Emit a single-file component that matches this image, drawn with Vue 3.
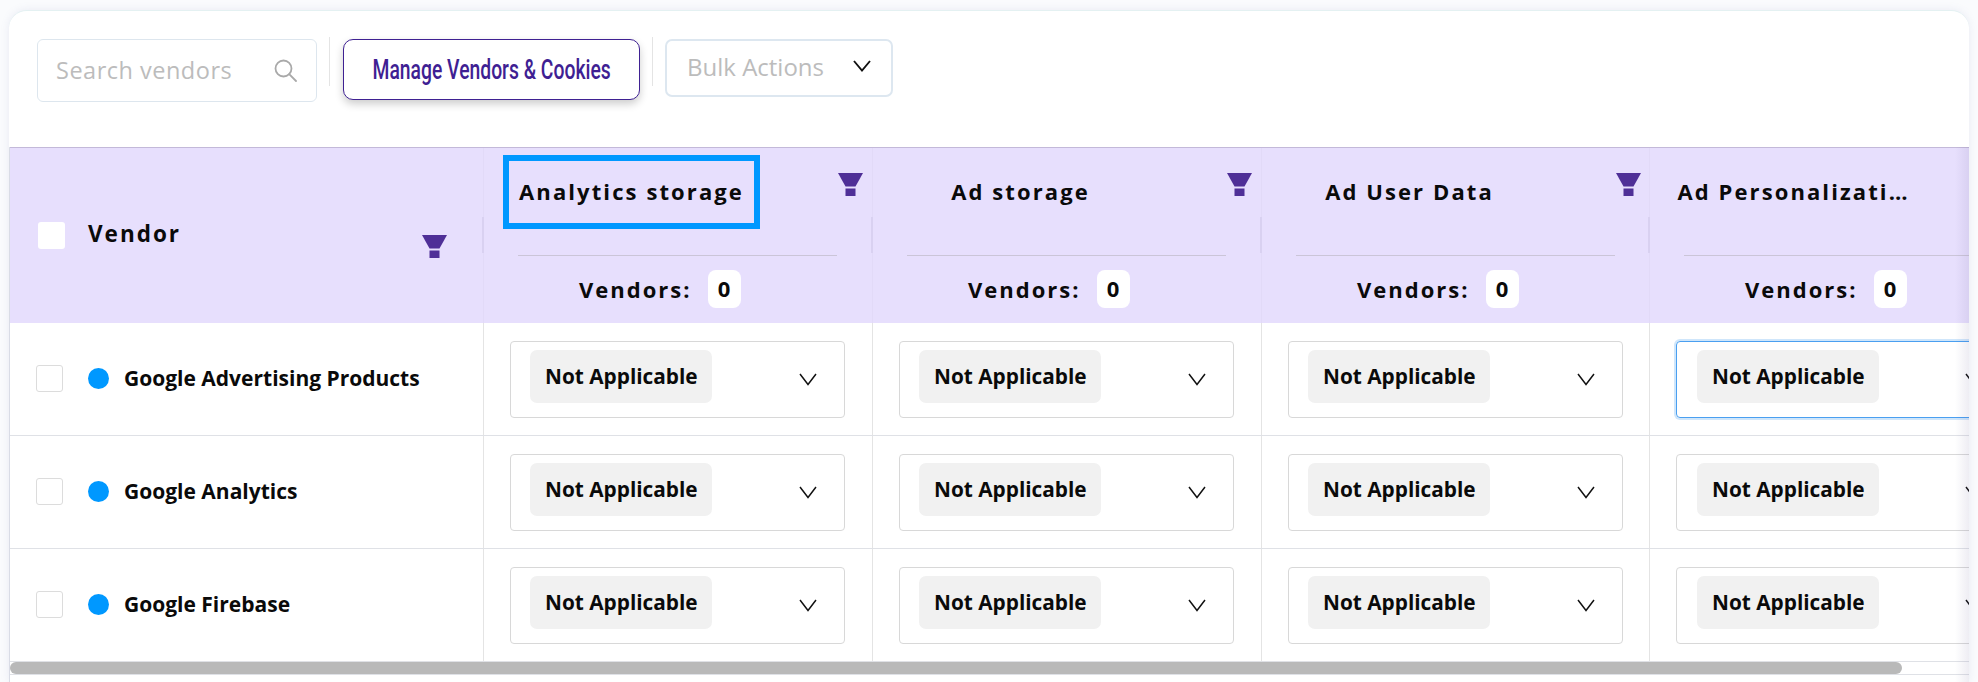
<script setup>
const columns = [
  { title: 'Analytics storage', active: true, filter: true },
  { title: 'Ad storage', filter: true },
  { title: 'Ad User Data', filter: true, narrow: true },
  { title: 'Ad Personalizati…', last: true, filter: false }
]
const vendors = ['Google Advertising Products', 'Google Analytics', 'Google Firebase']
</script>

<template>
  <div class="page">
    <section class="card">
      <div class="toolbar">
        <div class="search">
          <span class="placeholder">Search vendors</span>
          <svg class="search-icon" width="23" height="23" viewBox="0 0 23 23" fill="none" stroke="#a9a9a9" stroke-width="1.8">
            <circle cx="9.5" cy="9.5" r="8" />
            <path d="M15.2 15.2L22 22" stroke-linecap="round" />
          </svg>
        </div>
        <div class="divider"></div>
        <button class="manage"><span>Manage Vendors &amp; Cookies</span></button>
        <div class="divider second"></div>
        <div class="bulk">
          <span class="bulk-label">Bulk Actions</span>
          <svg class="bulk-chev" width="18" height="12" viewBox="0 0 18 12" fill="none" stroke="#111" stroke-width="1.9">
            <path d="M1 1l8 9.5L17 1" />
          </svg>
        </div>
      </div>

      <div class="table">
        <div class="head-row">
          <div class="head-vendor">
            <span class="head-check"></span>
            <span class="head-label">Vendor</span>
            <svg class="funnel vendor-funnel" width="25" height="23" viewBox="0 0 25 23">
              <path d="M0 0h25l-7.500 13.500h-10z" fill="#4f2f97" />
              <rect x="7.500" y="15.500" width="10" height="7.500" fill="#4f2f97" />
            </svg>
          </div>
          <div v-for="c in columns" :key="c.title" class="head-col" :class="{ wide: c.last, narrow: c.narrow }">
            <div class="title-row">
              <div class="title-box" :class="{ active: c.active, shifted: c.last }">{{ c.title }}</div>
              <svg v-if="c.filter" class="funnel" width="25" height="23" viewBox="0 0 25 23">
                <path d="M0 0h25l-7.500 13.500h-10z" fill="#4f2f97" />
                <rect x="7.500" y="15.500" width="10" height="7.500" fill="#4f2f97" />
              </svg>
            </div>
            <div class="head-rule"></div>
            <div class="count-row">
              <span class="count-label">Vendors:</span>
              <span class="count-chip">0</span>
            </div>
          </div>
        </div>

        <div v-for="(v, r) in vendors" :key="v" class="row">
          <div class="vendor-cell">
            <span class="check"></span>
            <span class="dot"></span>
            <span class="name">{{ v }}</span>
          </div>
          <div v-for="c in columns" :key="c.title" class="cell" :class="{ wide: c.last, narrow: c.narrow }">
            <div class="select" :class="{ focused: c.last && r === 0 }">
              <span class="chip">Not Applicable</span>
              <svg class="chev" width="18" height="13" viewBox="0 0 18 13" fill="none" stroke="#111" stroke-width="1.500">
                <path d="M1 1l8 10.500L17 1" />
              </svg>
            </div>
          </div>
        </div>

        <div class="scrollbar"><div class="thumb"></div></div>
        <div class="fade"></div>
      </div>
    </section>
  </div>
</template>

<style>
html, body { margin: 0; background: #fafbfd; }
</style>

<style scoped>
.page {
  width: 1978px;
  height: 682px;
  overflow: hidden;
  padding: 10px 9px 0;
  box-sizing: border-box;
  font-family: "Open Sans", "Noto Sans", sans-serif;
  color: #0a0a0a;
}
.card {
  width: 1960px;
  height: 672px;
  background: #fff;
  border-radius: 18px 18px 0 0;
  border-top: 1px solid #e4f1f2;
  box-shadow: 0 0 9px rgba(125, 135, 185, 0.14);
  box-sizing: border-box;
  overflow: hidden;
}
.toolbar {
  height: 136px;
  box-sizing: border-box;
  padding: 28px 0 0 28px;
  display: flex;
  align-items: flex-start;
}
.search {
  width: 280px;
  height: 63px;
  box-sizing: border-box;
  border: 1px solid #dde6ee;
  border-radius: 6px;
  display: flex;
  align-items: center;
  padding: 0 19px 0 18px;
}
.placeholder {
  color: #bcbcbc;
  font-size: 23.500px;
  letter-spacing: 0.5px;
  flex: 1;
  margin-top: -2px;
}
.divider {
  width: 1px;
  height: 49px;
  margin: -2px 13px 0 12px;
  background: #e4e4e4;
}
.divider.second { margin: -2px 12px 0 12px; }
.manage {
  width: 297px;
  height: 61px;
  box-sizing: border-box;
  border: 1.5px solid #3f2192;
  border-radius: 10px;
  background: #fff;
  box-shadow: 0 4px 8px rgba(0, 0, 0, 0.2);
  padding: 0;
  font-family: Roboto, "Liberation Sans", sans-serif;
  font-weight: 500;
  font-size: 28px;
  color: #3f1f93;
  white-space: nowrap;
  display: flex;
  align-items: center;
  justify-content: center;
}
.manage span {
  display: inline-block;
  transform: scaleX(0.69);
}
.bulk {
  width: 228px;
  height: 58px;
  box-sizing: border-box;
  border: 2px solid #dde7f0;
  border-radius: 7px;
  display: flex;
  align-items: center;
  padding: 0 20px 4px 20px;
}
.bulk-label {
  color: #bcbcbc;
  font-size: 24px;
  flex: 1;
}
.table {
  position: relative;
  height: 535px;
  border-left: 1px solid #d9dce6;
  overflow: hidden;
}
.head-row {
  height: 176px;
  box-sizing: border-box;
  background: #e7dffd;
  border-top: 1px solid #c3b9d9;
  display: flex;
}
.head-vendor {
  width: 473px;
  flex: none;
  display: flex;
  align-items: flex-start;
  padding: 74px 36px 0 28px;
  box-sizing: border-box;
}
.head-check {
  width: 27px;
  height: 27px;
  background: #fff;
  border-radius: 3px;
}
.head-label {
  margin-left: 23px;
  font-weight: 700;
  font-size: 22.500px;
  line-height: 24px;
  letter-spacing: 2px;
}
.funnel { flex: none; }
.vendor-funnel { margin: 13px 0 0 auto; }
.head-col {
  width: 389px;
  flex: none;
  box-sizing: border-box;
  border-left: 1px solid #e2daf8;
  position: relative;
  padding-top: 7px;
}
.head-col.narrow { width: 388px; }
.head-col.wide { width: 340px; }
.head-col::before {
  content: "";
  position: absolute;
  left: -2px;
  top: 69px;
  height: 36px;
  width: 2px;
  background: #d9d1f1;
}
.title-row {
  display: flex;
  align-items: flex-start;
  padding-left: 19px;
}
.title-box {
  width: 257px;
  height: 74px;
  box-sizing: border-box;
  border: 6px solid transparent;
  font-weight: 700;
  font-size: 22px;
  letter-spacing: 2.1px;
  line-height: 60px;
  text-align: center;
  white-space: nowrap;
  flex: none;
}
.title-box.active { border-color: #0098ff; }
.title-box.shifted { width: 249px; }
.title-row .funnel { margin: 18px 0 0 78px; }
.head-rule {
  width: 319px;
  height: 1px;
  background: #cbc5d8;
  margin: 26px 0 0 34px;
}
.count-row {
  display: flex;
  align-items: center;
  padding-left: 95px;
  margin-top: 14px;
}
.count-label {
  font-weight: 700;
  font-size: 22px;
  letter-spacing: 2px;
  line-height: 36px;
}
.count-chip {
  width: 33px;
  height: 38px;
  margin-left: 16px;
  background: #fff;
  border-radius: 8px;
  font-weight: 700;
  font-size: 22px;
  line-height: 37px;
  text-align: center;
}
.row {
  height: 113px;
  box-sizing: border-box;
  display: flex;
  border-bottom: 1px solid #dfe1e6;
}
.vendor-cell {
  width: 473px;
  flex: none;
  display: flex;
  align-items: center;
  padding: 0 0 2px 26px;
  box-sizing: border-box;
}
.check {
  width: 27px;
  height: 27px;
  box-sizing: border-box;
  border: 1px solid #dcdcdc;
  border-radius: 3px;
  flex: none;
}
.dot {
  width: 21px;
  height: 21px;
  border-radius: 50%;
  background: #0098ff;
  margin-left: 25px;
  flex: none;
}
.name {
  margin-left: 15px;
  font-weight: 700;
  font-size: 21px;
  white-space: nowrap;
}
.cell {
  width: 389px;
  flex: none;
  box-sizing: border-box;
  border-left: 1px solid #e4e4e4;
  display: flex;
  align-items: center;
  padding-left: 26px;
}
.cell.narrow { width: 388px; }
.cell.wide { width: 340px; overflow: hidden; }
.select {
  width: 335px;
  height: 77px;
  flex: none;
  box-sizing: border-box;
  border: 1px solid #d8d8d8;
  border-radius: 4px;
  display: flex;
  align-items: flex-start;
  padding: 8px 27px 0 19px;
}
.wide .select { padding-left: 20px; }
.select.focused {
  border-color: #4a9ff0;
  box-shadow: 0 0 0 2px #cfe6fb;
}
.chip {
  width: 182px;
  height: 53px;
  box-sizing: border-box;
  background: #f1f1f1;
  border-radius: 7px;
  padding-left: 15px;
  font-weight: 700;
  font-size: 20.800px;
  line-height: 53px;
  white-space: nowrap;
}
.chev { margin: 23px 0 0 auto; flex: none; }
.scrollbar {
  height: 14px;
  box-sizing: border-box;
  border-bottom: 1px solid #dfe1e6;
  margin-top: -1px;
  border-top: 1px solid #dfe1e6;
  background: #fff;
}
.thumb {
  width: 1892px;
  height: 12px;
  background: #b9b9b9;
  border-radius: 7px;
}
.fade {
  position: absolute;
  right: 0;
  top: 0;
  bottom: 0;
  width: 14px;
  background: linear-gradient(to right, rgba(90, 80, 140, 0), rgba(90, 80, 140, 0.1));
  pointer-events: none;
}
</style>
